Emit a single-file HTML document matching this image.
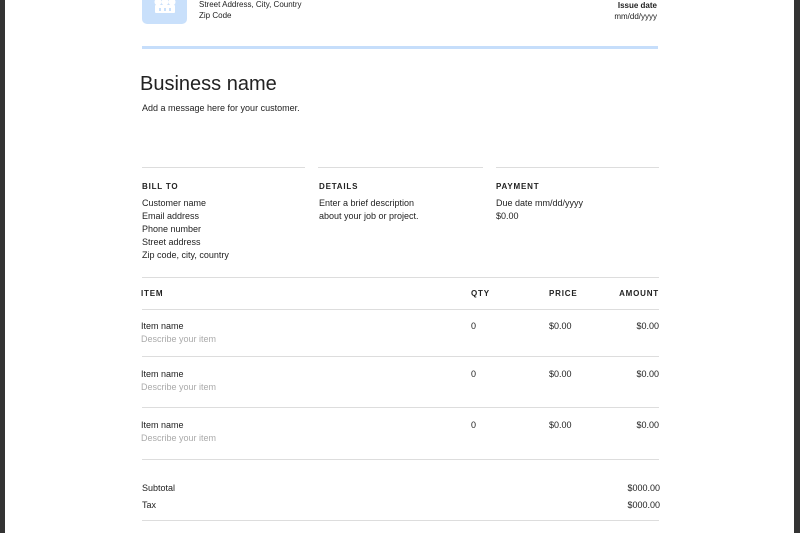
<!DOCTYPE html>
<html><head><style>
body{margin:0;width:800px;height:533px;overflow:hidden;background:#fff;font-family:"Liberation Sans",sans-serif;color:#222;position:relative}
.a{position:absolute;white-space:nowrap}
.s{font-size:9px;line-height:13px}
.h{font-size:8px;font-weight:bold;letter-spacing:0.8px}
.l{position:absolute;height:1px;background:#ddd}
.g{color:#aaa}
.r{text-align:right}
</style></head><body>
<div class="a" style="left:0;top:0;width:5px;height:533px;background:#333"></div>
<div class="a" style="left:794px;top:0;width:6px;height:533px;background:#333"></div>
<div class="a" style="left:142px;top:-10px;width:45px;height:34px;background:#c9e0fb;border-radius:5px"></div>
<svg class="a" style="left:151px;top:0" width="28" height="16"><g fill="#fff"><circle cx="7" cy="2" r="3.5"/><circle cx="14" cy="2" r="3.5"/><circle cx="21" cy="2" r="3.5"/><rect x="4" y="5" width="20" height="8" rx="1"/></g><g fill="#c9e0fb"><rect x="8" y="8" width="2" height="3"/><rect x="13" y="8" width="2" height="3"/><rect x="18" y="8" width="2" height="3"/></g></svg>
<div class="a s" style="left:199px;top:-1px;font-size:8px;line-height:11px">Street Address, City, Country<br>Zip Code</div>
<div class="a s r" style="right:143px;top:0px;font-size:8px;line-height:11px"><b>Issue date</b><br>mm/dd/yyyy</div>
<div class="a" style="left:142px;top:46px;width:516px;height:3px;background:#c6defb"></div>
<div class="a" style="left:140px;top:73px;font-size:20px;color:#222">Business name</div>
<div class="a s" style="left:142px;top:102px">Add a message here for your customer.</div>
<div class="l" style="left:142px;top:167px;width:163px"></div>
<div class="l" style="left:318px;top:167px;width:165px"></div>
<div class="l" style="left:496px;top:167px;width:163px"></div>
<div class="a h" style="left:142px;top:182px">BILL TO</div>
<div class="a h" style="left:319px;top:182px">DETAILS</div>
<div class="a h" style="left:496px;top:182px">PAYMENT</div>
<div class="a s" style="left:142px;top:197px">Customer name<br>Email address<br>Phone number<br>Street address<br>Zip code, city, country</div>
<div class="a s" style="left:319px;top:197px">Enter a brief description<br>about your job or project.</div>
<div class="a s" style="left:496px;top:197px">Due date mm/dd/yyyy<br>$0.00</div>
<div class="l" style="left:142px;top:277px;width:517px"></div>
<div class="a h" style="left:141px;top:289px">ITEM</div>
<div class="a h" style="left:471px;top:289px">QTY</div>
<div class="a h" style="left:549px;top:289px">PRICE</div>
<div class="a h r" style="right:141px;top:289px">AMOUNT</div>
<div class="l" style="left:142px;top:309px;width:517px"></div>

<div class="a s" style="left:141px;top:320px">Item name<br><span class="g">Describe your item</span></div>
<div class="a s" style="left:471px;top:320px">0</div><div class="a s" style="left:549px;top:320px">$0.00</div><div class="a s r" style="right:141px;top:320px">$0.00</div>
<div class="l" style="left:142px;top:356px;width:517px"></div>
<div class="a s" style="left:141px;top:368px">Item name<br><span class="g">Describe your item</span></div>
<div class="a s" style="left:471px;top:368px">0</div><div class="a s" style="left:549px;top:368px">$0.00</div><div class="a s r" style="right:141px;top:368px">$0.00</div>
<div class="l" style="left:142px;top:407px;width:517px"></div>
<div class="a s" style="left:141px;top:419px">Item name<br><span class="g">Describe your item</span></div>
<div class="a s" style="left:471px;top:419px">0</div><div class="a s" style="left:549px;top:419px">$0.00</div><div class="a s r" style="right:141px;top:419px">$0.00</div>
<div class="l" style="left:142px;top:459px;width:517px"></div>
<div class="a s" style="left:142px;top:482px">Subtotal</div><div class="a s r" style="right:140px;top:482px">$000.00</div>
<div class="a s" style="left:142px;top:499px">Tax</div><div class="a s r" style="right:140px;top:499px">$000.00</div>
<div class="l" style="left:142px;top:520px;width:517px"></div>
</body></html>
